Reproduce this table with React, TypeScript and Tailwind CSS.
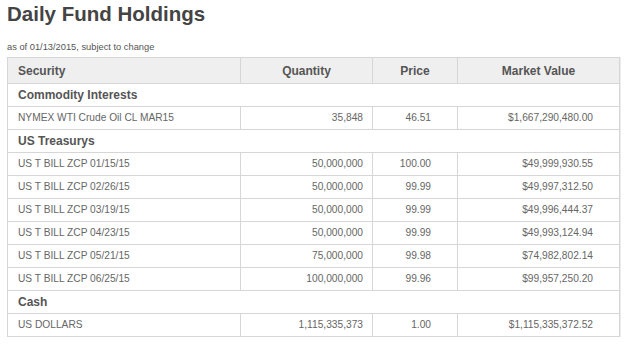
import React from "react";

type Row = { s: string; q: string; p: string; v: string };
type Section = { name: string; rows: Row[] };

const data: Section[] = [
  {
    name: "Commodity Interests",
    rows: [{ s: "NYMEX WTI Crude Oil CL MAR15", q: "35,848", p: "46.51", v: "$1,667,290,480.00" }],
  },
  {
    name: "US Treasurys",
    rows: [
      { s: "US T BILL ZCP 01/15/15", q: "50,000,000", p: "100.00", v: "$49,999,930.55" },
      { s: "US T BILL ZCP 02/26/15", q: "50,000,000", p: "99.99", v: "$49,997,312.50" },
      { s: "US T BILL ZCP 03/19/15", q: "50,000,000", p: "99.99", v: "$49,996,444.37" },
      { s: "US T BILL ZCP 04/23/15", q: "50,000,000", p: "99.99", v: "$49,993,124.94" },
      { s: "US T BILL ZCP 05/21/15", q: "75,000,000", p: "99.98", v: "$74,982,802.14" },
      { s: "US T BILL ZCP 06/25/15", q: "100,000,000", p: "99.96", v: "$99,957,250.20" },
    ],
  },
  {
    name: "Cash",
    rows: [{ s: "US DOLLARS", q: "1,115,335,373", p: "1.00", v: "$1,115,335,372.52" }],
  },
];

export default function App() {
  return (
    <div
      className="w-[640px] h-[352px] bg-white overflow-hidden"
      style={{ fontFamily: '"Liberation Sans", Arial, sans-serif' }}
    >
      <div className="pl-[7px] pt-[1px]">
        <h1 className="text-[20.5px] leading-[26px] font-bold text-[#444444]">Daily Fund Holdings</h1>
        <p className="mt-[14px] text-[9.3px] leading-[12px] text-[#555555]">as of 01/13/2015, subject to change</p>
        <table className="mt-[4px] border-collapse w-[612px] table-fixed border border-[#d6d6d6] shadow-[1px_0_0_#ececec]">
          <colgroup>
            <col className="w-[233px]" />
            <col className="w-[132px]" />
            <col className="w-[85px]" />
            <col className="w-[162px]" />
          </colgroup>
          <thead>
            <tr className="h-[26px] bg-[#efefef] text-[12px] font-bold text-[#555555]">
              <th className="border border-[#d6d6d6] text-left pl-[10px] font-bold">Security</th>
              <th className="border border-[#d6d6d6] text-center font-bold">Quantity</th>
              <th className="border border-[#d6d6d6] text-center font-bold">Price</th>
              <th className="border border-[#d6d6d6] text-center font-bold">Market Value</th>
            </tr>
          </thead>
          <tbody>
            {data.map((sec) => (
              <React.Fragment key={sec.name}>
                <tr className="h-[23px]">
                  <td
                    colSpan={4}
                    className="border border-[#d6d6d6] pl-[10px] text-[12px] font-bold text-[#555555]"
                  >
                    {sec.name}
                  </td>
                </tr>
                {sec.rows.map((r) => (
                  <tr key={r.s} className="h-[23px] text-[10.2px] text-[#666666]">
                    <td className="border border-[#d6d6d6] pl-[10px]">{r.s}</td>
                    <td className="border border-[#d6d6d6] text-right pr-[9px]">{r.q}</td>
                    <td className="border border-[#d6d6d6] text-right pr-[26px]">{r.p}</td>
                    <td className="border border-[#d6d6d6] text-right pr-[26px]">{r.v}</td>
                  </tr>
                ))}
              </React.Fragment>
            ))}
          </tbody>
        </table>
      </div>
    </div>
  );
}
